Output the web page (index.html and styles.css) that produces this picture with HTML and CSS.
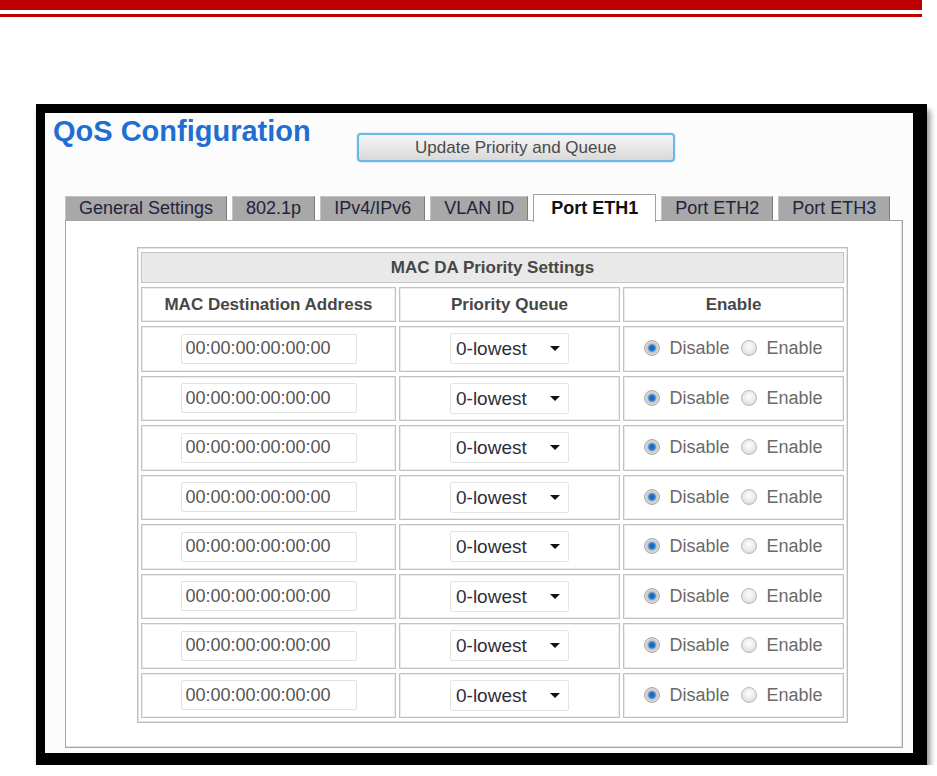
FILE: index.html
```html
<!DOCTYPE html>
<html lang="en">
<head>
  <meta charset="UTF-8" />
  <meta name="viewport" content="width=device-width, initial-scale=1.0"/>
  <title>QoS Configuration</title>
  <link rel="stylesheet" href="styles.css">
</head>
<body>

<div class="page-rule"></div>

<div class="frame">

  <!-- Title & update button -->
  <div class="top">
    <h1>QoS Configuration</h1>
    <button type="button" class="btn-update">Update Priority and Queue</button>
  </div>

  <!-- Tabs -->
  <ul class="tabs">
    <li>General Settings</li>
    <li>802.1p</li>
    <li>IPv4/IPv6</li>
    <li>VLAN ID</li>
    <li class="active">Port ETH1</li>
    <li>Port ETH2</li>
    <li>Port ETH3</li>
  </ul>

  <div class="panel">
    <table class="prio">
      <colgroup>
        <col class="col-mac">
        <col class="col-queue">
        <col class="col-enable">
      </colgroup>
      <tr>
        <th colspan="3" class="caption">MAC DA Priority Settings</th>
      </tr>
      <tr>
        <th>MAC Destination Address</th>
        <th>Priority Queue</th>
        <th>Enable</th>
      </tr>

      <tr>
        <td><input type="text" class="mac" value="00:00:00:00:00:00" /></td>
        <td><span class="select"><select><option>0-lowest</option></select></span></td>
        <td>
          <label><input type="radio" name="en1" checked /> Disable</label>
          <label><input type="radio" name="en1" /> Enable</label>
        </td>
      </tr>
      <tr>
        <td><input type="text" class="mac" value="00:00:00:00:00:00" /></td>
        <td><span class="select"><select><option>0-lowest</option></select></span></td>
        <td>
          <label><input type="radio" name="en2" checked /> Disable</label>
          <label><input type="radio" name="en2" /> Enable</label>
        </td>
      </tr>
      <tr>
        <td><input type="text" class="mac" value="00:00:00:00:00:00" /></td>
        <td><span class="select"><select><option>0-lowest</option></select></span></td>
        <td>
          <label><input type="radio" name="en3" checked /> Disable</label>
          <label><input type="radio" name="en3" /> Enable</label>
        </td>
      </tr>
      <tr>
        <td><input type="text" class="mac" value="00:00:00:00:00:00" /></td>
        <td><span class="select"><select><option>0-lowest</option></select></span></td>
        <td>
          <label><input type="radio" name="en4" checked /> Disable</label>
          <label><input type="radio" name="en4" /> Enable</label>
        </td>
      </tr>
      <tr>
        <td><input type="text" class="mac" value="00:00:00:00:00:00" /></td>
        <td><span class="select"><select><option>0-lowest</option></select></span></td>
        <td>
          <label><input type="radio" name="en5" checked /> Disable</label>
          <label><input type="radio" name="en5" /> Enable</label>
        </td>
      </tr>
      <tr>
        <td><input type="text" class="mac" value="00:00:00:00:00:00" /></td>
        <td><span class="select"><select><option>0-lowest</option></select></span></td>
        <td>
          <label><input type="radio" name="en6" checked /> Disable</label>
          <label><input type="radio" name="en6" /> Enable</label>
        </td>
      </tr>
      <tr>
        <td><input type="text" class="mac" value="00:00:00:00:00:00" /></td>
        <td><span class="select"><select><option>0-lowest</option></select></span></td>
        <td>
          <label><input type="radio" name="en7" checked /> Disable</label>
          <label><input type="radio" name="en7" /> Enable</label>
        </td>
      </tr>
      <tr>
        <td><input type="text" class="mac" value="00:00:00:00:00:00" /></td>
        <td><span class="select"><select><option>0-lowest</option></select></span></td>
        <td>
          <label><input type="radio" name="en8" checked /> Disable</label>
          <label><input type="radio" name="en8" /> Enable</label>
        </td>
      </tr>
    </table>
  </div>

</div>

</body>
</html>
```

FILE: styles.css
```css
body {
  font-family: 'Liberation Sans', Arial, sans-serif;
  background-color: #fff;
  margin: 0;
}

/* double red rule at the top of the page */
.page-rule {
  width: 922px;
  height: 4px;
  border-top: 10px solid #c00000;
  border-bottom: 3px solid #c00000;
}

.frame {
  width: 850px;
  margin: 87px 0 0 36px;
  padding: 2px 10px 5px 8px;
  background: #fcfcfc;
  border: 9px solid #000;
  border-right-width: 14px;
  border-bottom-width: 12px;
  box-shadow: 3px 6px 6px rgba(0,0,0,0.45);
}

.top {
  display: flex;
  align-items: flex-start;
  gap: 46px;
}

h1 {
  margin: 0;
  font-size: 29px;
  line-height: 32px;
  color: #1f6fd3;
}

.btn-update {
  margin-top: 18px;
  width: 318px;
  height: 29px;
  font-family: inherit;
  font-size: 17px;
  color: #4a4a4a;
  background: linear-gradient(#f6f6f6, #d9d9d9);
  border: 2px solid #6db6e6;
  border-radius: 4px;
  box-shadow: 0 0 2px #9fd0f0;
  cursor: pointer;
}

/* tabs */
.tabs {
  display: flex;
  align-items: flex-end;
  gap: 5px;
  list-style: none;
  margin: 32px 0 0 12px;
  padding: 0;
  position: relative;
  z-index: 1;
}

.tabs li {
  box-sizing: border-box;
  height: 24px;
  line-height: 23px;
  padding: 0 13px;
  font-size: 18px;
  color: #23233c;
  background: #a8a8a8;
  border: 1px solid #7c7c7c;
  border-top-color: #c4c4c4;
  border-left-color: #c4c4c4;
  border-bottom: none;
  white-space: nowrap;
}

.tabs li.active {
  height: 28px;
  line-height: 27px;
  margin-bottom: -2px;
  padding: 0 17px;
  background: #fff;
  color: #111;
  font-weight: bold;
  border-color: #a0a0a0;
}

.panel {
  margin-left: 12px;
  padding: 26px 0 24px 71px;
  background: #fff;
  border: 1px solid #a4a4a4;
  box-shadow: inset -1px -1px 0 #e0e0e0;
}

/* priority table */
.prio {
  table-layout: fixed;
  border: 1px solid #bdbdbd;
  border-spacing: 3px 4px;
  box-shadow: inset 0 0 0 1px #e4e4e4;
}

.col-mac { width: 255px; }
.col-queue, .col-enable { width: 221px; }

.prio th,
.prio td {
  border: 1px solid #c2c2c2;
  box-shadow: inset 0 0 0 1px #ececec;
  background: #fff;
  text-align: center;
  padding: 0;
}

.prio th {
  height: 33px;
  font-size: 17px;
  color: #474747;
}

.prio th.caption {
  height: 29px;
  background: #e9e9e9;
}

.prio td {
  height: 43.5px;
  font-size: 18px;
  color: #6a6a6a;
}

input.mac {
  box-sizing: border-box;
  width: 176px;
  height: 30px;
  padding: 0 4px;
  font-family: inherit;
  font-size: 18px;
  color: #555;
  background: #fff;
  border: 1px solid #e2e2e2;
  border-radius: 2px;
  vertical-align: middle;
}

.select {
  display: inline-block;
  position: relative;
  vertical-align: middle;
}

.select select {
  display: block;
  box-sizing: border-box;
  width: 119px;
  height: 31px;
  padding: 0 5px;
  font-family: inherit;
  font-size: 19px;
  color: #2e2e3a;
  background: #fff;
  border: 1px solid #e4e4e4;
  border-radius: 2px;
  appearance: none;
  -webkit-appearance: none;
}

.select::after {
  content: "";
  position: absolute;
  right: 9px;
  top: 13px;
  border-left: 5px solid transparent;
  border-right: 5px solid transparent;
  border-top: 5px solid #111;
}

.prio label {
  white-space: nowrap;
}

.prio label + label {
  margin-left: 7px;
}

.prio input[type="radio"] {
  -webkit-appearance: none;
  appearance: none;
  width: 16px;
  height: 16px;
  margin: 0 4px 0 0;
  vertical-align: -2px;
  border: 1px solid #b8b8b8;
  border-radius: 50%;
  background: radial-gradient(circle at 50% 40%, #fff 0, #e6e6e6 60%, #cfcfcf 100%);
}

.prio input[type="radio"]:checked {
  border-color: #a8a8a8;
  background: radial-gradient(circle, #0f5cb0 0, #2a7fd0 3px, #c6c6c6 4.5px, #e8e8e8 8px);
}
```
